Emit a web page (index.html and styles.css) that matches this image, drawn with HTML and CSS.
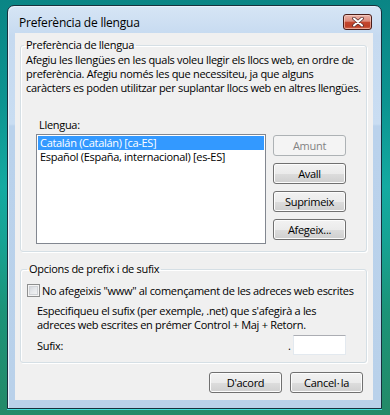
FILE: index.html
```html
<!DOCTYPE html>
<html lang="ca">
<head>
    <meta charset="utf-8" />
    <link rel="stylesheet" href="styles.css">
    <title>Preferència de llengua</title>
</head>
<body>
<div class="window">
    <div class="titlebar">
        <span class="title">Preferència de llengua</span>
        <a class="close" href="javascript:void(0)">
            <svg width="12" height="10" viewBox="0 0 12 10">
                <path d="M2 1.5 L10 8.5 M10 1.5 L2 8.5" stroke="#5a3030" stroke-width="3.6" stroke-linecap="round"/>
                <path d="M2 1.5 L10 8.5 M10 1.5 L2 8.5" stroke="#fff" stroke-width="2" stroke-linecap="round"/>
            </svg>
        </a>
    </div>
    <div class="client">
        <fieldset class="group group-lang">
            <legend>Preferència de llengua</legend>
            <p class="intro">Afegiu les llengües en les quals voleu llegir els llocs web, en ordre de<br>preferència. Afegiu només les que necessiteu, ja que alguns<br>caràcters es poden utilitzar per suplantar llocs web en altres llengües.</p>
            <div class="lang-label">Llengua:</div>
            <div class="lang-row">
                <ul class="listbox">
                    <li class="sel">Catalán (Catalán) [ca-ES]</li>
                    <li>Español (España, internacional) [es-ES]</li>
                </ul>
                <div class="side-btns">
                    <a class="btn btn-off" href="javascript:void(0)">Amunt</a>
                    <a class="btn" href="javascript:void(0)">Avall</a>
                    <a class="btn" href="javascript:void(0)">Suprimeix</a>
                    <a class="btn" href="javascript:void(0)">Afegeix...</a>
                </div>
            </div>
        </fieldset>
        <fieldset class="group group-fix">
            <legend>Opcions de prefix i de sufix</legend>
            <label class="check-row"><span class="check"></span>No afegeixis "www" al començament de les adreces web escrites</label>
            <p class="hint">Especifiqueu el sufix (per exemple, .net) que s'afegirà a les<br>adreces web escrites en prémer Control + Maj + Retorn.</p>
            <div class="suffix-row">
                <span class="suffix-label">Sufix:</span>
                <span class="dot">.</span>
                <span class="textbox"></span>
            </div>
        </fieldset>
        <div class="footer">
            <a class="btn" href="javascript:void(0)">D'acord</a>
            <a class="btn" href="javascript:void(0)">Cancel<span class="midot">·</span>la</a>
        </div>
    </div>
</div>
</body>
</html>
```
FILE: styles.css
```css
*{margin:0;padding:0;box-sizing:border-box;}
ul{list-style-type:none;}
a{color:#000;text-decoration:none;outline:none;}
html,body{width:390px;height:415px;overflow:hidden;}
body{
    padding:5px 0 0 7px;
    font:11px/13px "Open Sans",sans-serif;
    letter-spacing:-0.3px;
    color:#000;
    background:linear-gradient(180deg,#0a8585 0%,#0c9491 25%,#14aaa1 45%,#16a394 58%,#1c9378 75%,#238a68 100%);
}

/* window frame */
.window{
    display:flex;flex-direction:column;
    width:375px;height:404px;
    padding:0 8px 8px 7px;
    border:1px solid #17303d;
    border-radius:7px 7px 0 0;
    background:linear-gradient(180deg,#d6e5f5 0,#c6daf0 30px,#c9ddf2 118px,#bad2ec 120px,#b9d1ea 100%);
    box-shadow:0 1px 0 #47dcdc, inset 1px 1px 0 #e8f1fb;
}
.titlebar{display:flex;justify-content:space-between;align-items:flex-start;height:27px;padding:10px 1px 0 4px;}
.title{font-size:12px;line-height:13px;letter-spacing:-0.2px;color:#000;}
.close{
    display:flex;align-items:center;justify-content:center;
    width:29px;height:16px;margin-top:-2px;
    border:1px solid #4a1c18;border-radius:3px;
    background:linear-gradient(180deg,#eab3a8 0%,#dd8b7c 45%,#c5472f 50%,#bd3f27 80%,#d86d52 100%);
    box-shadow:inset 0 0 0 1px rgba(255,220,210,0.55);
}
.close svg{display:block;}

.client{flex:1;background:#f0f0f0;padding:4px 6px 0 5px;}

/* group boxes */
.group{border:1px solid #d5dfe5;border-radius:3px;padding:0 5px 7px 5px;box-shadow:inset 1px 1px 0 #fff,1px 1px 0 #fff;}
.group legend{line-height:16px;padding:0 2px;margin-left:-2px;}
.group-fix{margin-top:9px;}
.group-fix legend{margin-left:1px;}

.intro{line-height:14px;margin-top:0;}
.lang-label{margin:23px 0 0 13px;}
.lang-row{display:flex;align-items:flex-start;gap:7px;margin:3px 0 0 10px;}
.listbox{width:230px;height:110px;border:1px solid #828790;background:#fff;padding:1px;}
.listbox li{height:14px;line-height:14px;padding-left:2px;white-space:nowrap;}
.listbox li.sel{background:#3399ff;color:#fff;}
.side-btns{display:flex;flex-direction:column;gap:7px;margin-top:1px;}

/* buttons */
.btn{
    display:block;width:73px;height:21px;line-height:19px;text-align:center;
    border:1px solid #707070;border-radius:3px;
    background:linear-gradient(180deg,#f2f2f2 0%,#ebebeb 50%,#dddddd 51%,#cfcfcf 100%);
    box-shadow:inset 0 0 0 1px #fcfcfc;
}
.btn-off{border-color:#adb2b5;background:#f4f4f4;color:#838383;box-shadow:none;}
.midot{padding:0 1px 0 0.5px;letter-spacing:0;}

/* prefix / suffix */
.check-row{display:flex;align-items:center;height:13px;margin:7px 0 0 1px;}
.check{
    width:13px;height:13px;margin-right:2px;
    border:1px solid #8e8f8f;
    background:linear-gradient(135deg,#cbcfd5 0%,#e6e8eb 50%,#f7f7f7 100%);
    box-shadow:inset 0 0 0 1px #f4f4f4,inset 0 0 0 2px #d0d3d7;
}
.hint{line-height:14px;margin:7px 0 0 11px;}
.suffix-row{display:flex;align-items:center;height:20px;margin:3px 0 0 11px;}
.suffix-label{width:251px;}
.dot{width:5px;}
.textbox{width:53px;height:20px;background:#fff;border:1px solid #e3e9ef;border-top-color:#abadb3;}

.footer{display:flex;justify-content:flex-end;gap:8px;margin-top:9px;padding-right:4px;}
```
